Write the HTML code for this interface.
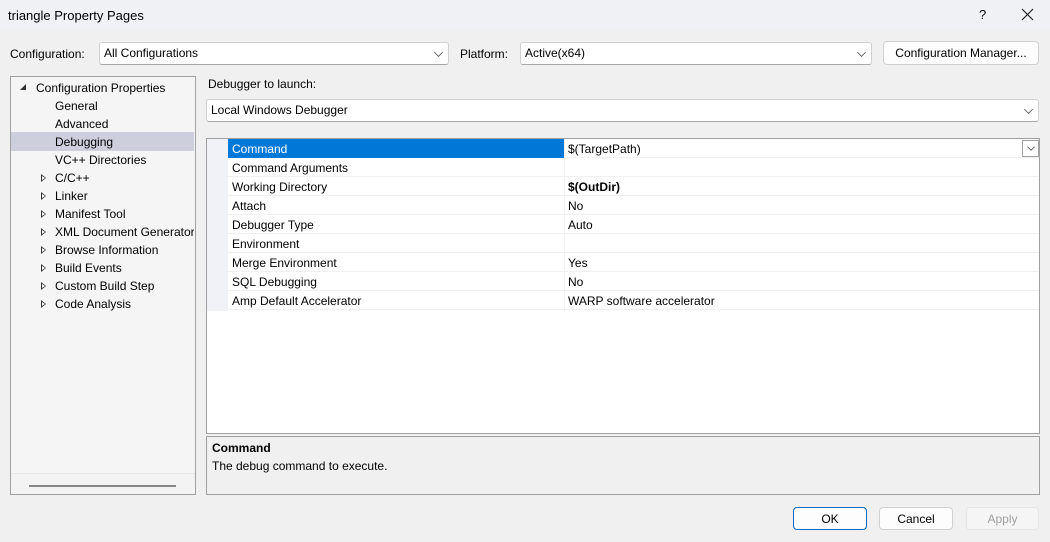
<!DOCTYPE html>
<html><head><style>
*{box-sizing:border-box;margin:0;padding:0}
body{width:1050px;height:542px;background:#f0f0f0;font-family:"Liberation Sans",sans-serif;font-size:12px;color:#000;position:relative;overflow:hidden;white-space:nowrap}
.a{position:absolute}
.combo{position:absolute;background:#fff;border:1px solid #d0d0d0;border-bottom-color:#a8a8a8;border-radius:3px;padding-left:4px;line-height:21px}
.chev{position:absolute;right:6px;top:6px;width:7px;height:7px;border-right:1px solid #606060;border-bottom:1px solid #606060;transform:rotate(45deg) scale(.9);transform-origin:center}
.btn{position:absolute;background:#fdfdfd;border:1px solid #d0d0d0;border-radius:4px;text-align:center;line-height:22px}
.tree div{position:absolute;left:0;height:18px;line-height:18px;width:183px;overflow:hidden}
.tri{position:absolute;left:30px;top:5px;width:0;height:0;border-left:5px solid #333;border-top:4px solid transparent;border-bottom:4px solid transparent}
.tri:after{content:"";position:absolute;left:-4px;top:-2px;border-left:3px solid #fff;border-top:2px solid transparent;border-bottom:2px solid transparent}
.row{position:absolute;left:21px;width:811px;height:19px;border-bottom:1px solid #f0f0f0;line-height:20px}
.row span{position:absolute}
.n{left:4px}.v{left:340px}
</style></head><body>
<div class="a" style="left:0;top:0;width:1050px;height:30px;background:#eff1f5"></div>
<div class="a" style="left:8px;top:8px;font-size:13px">triangle Property Pages</div>
<div class="a" style="left:979px;top:7px;font-size:13px">?</div>
<svg class="a" style="left:1021px;top:8px" width="13" height="13"><path d="M1 1L12 12M12 1L1 12" stroke="#222" stroke-width="1.2"/></svg>

<div class="a" style="left:10px;top:47px">Configuration:</div>
<div class="combo" style="left:99px;top:42px;width:350px;height:23px">All Configurations<div class="chev"></div></div>
<div class="a" style="left:460px;top:47px">Platform:</div>
<div class="combo" style="left:520px;top:42px;width:352px;height:23px">Active(x64)<div class="chev"></div></div>
<div class="btn" style="left:883px;top:41px;width:156px;height:24px">Configuration Manager...</div>

<div class="a tree" style="left:10px;top:76px;width:186px;height:419px;background:#f5f5f5;border:1px solid #a0a0a0">
<div style="top:2px"><span class="a" style="left:9px;top:5px;border-right:6px solid #333;border-top:6px solid transparent;width:0;height:0"></span><span style="padding-left:25px">Configuration Properties</span></div>
<div style="top:20px;padding-left:44px">General</div>
<div style="top:38px;padding-left:44px">Advanced</div>
<div style="top:55px;padding-left:44px;background:#cdd0dc;height:19px;line-height:20px">Debugging</div>
<div style="top:74px;padding-left:44px">VC++ Directories</div>
<div style="top:92px;padding-left:44px"><i class="tri"></i>C/C++</div>
<div style="top:110px;padding-left:44px"><i class="tri"></i>Linker</div>
<div style="top:128px;padding-left:44px"><i class="tri"></i>Manifest Tool</div>
<div style="top:146px;padding-left:44px"><i class="tri"></i>XML Document Generator</div>
<div style="top:164px;padding-left:44px"><i class="tri"></i>Browse Information</div>
<div style="top:182px;padding-left:44px"><i class="tri"></i>Build Events</div>
<div style="top:200px;padding-left:44px"><i class="tri"></i>Custom Build Step</div>
<div style="top:218px;padding-left:44px"><i class="tri"></i>Code Analysis</div>
<span class="a" style="left:0;top:396px;width:184px;height:21px;border-top:1px solid #e8e8e8;background:#f3f3f3"></span>
<span class="a" style="left:18px;top:408px;width:147px;height:2px;background:#858585"></span>
</div>

<div class="a" style="left:208px;top:77px">Debugger to launch:</div>
<div class="combo" style="left:206px;top:99px;width:833px;height:23px">Local Windows Debugger<div class="chev"></div></div>

<div class="a" style="left:206px;top:138px;width:834px;height:296px;background:#fff;border:1px solid #a0a0a0">
<div class="a" style="left:0;top:0;width:21px;height:172px;background:#f0f2f8"></div>
<div class="row" style="top:0"><span style="left:0;top:0;width:337px;height:19px;background:#0078d7"></span><span class="n" style="color:#fff">Command</span><span class="v">$(TargetPath)</span>
<span class="a" style="left:794px;top:1px;width:17px;height:17px;border:1px solid #a0a0a0;background:#fff"><i class="chev" style="right:4px;top:3px;width:6px;height:6px"></i></span></div>
<div class="row" style="top:19px"><span class="n">Command Arguments</span></div>
<div class="row" style="top:38px"><span class="n">Working Directory</span><span class="v" style="font-weight:bold">$(OutDir)</span></div>
<div class="row" style="top:57px"><span class="n">Attach</span><span class="v">No</span></div>
<div class="row" style="top:76px"><span class="n">Debugger Type</span><span class="v">Auto</span></div>
<div class="row" style="top:95px"><span class="n">Environment</span></div>
<div class="row" style="top:114px"><span class="n">Merge Environment</span><span class="v">Yes</span></div>
<div class="row" style="top:133px"><span class="n">SQL Debugging</span><span class="v">No</span></div>
<div class="row" style="top:152px"><span class="n">Amp Default Accelerator</span><span class="v">WARP software accelerator</span></div>
<div class="a" style="left:357px;top:0;width:1px;height:172px;background:#f0f0f0"></div>
</div>

<div class="a" style="left:206px;top:436px;width:834px;height:59px;border:1px solid #a0a0a0;background:#f0f0f0">
<div class="a" style="left:5px;top:4px;font-weight:bold">Command</div>
<div class="a" style="left:5px;top:22px">The debug command to execute.</div>
</div>

<div class="btn" style="left:793px;top:507px;width:74px;height:23px;border:1px solid #0067c0">OK</div>
<div class="btn" style="left:879px;top:507px;width:74px;height:23px">Cancel</div>
<div class="btn" style="left:966px;top:507px;width:73px;height:23px;color:#a0a0a0;background:#f5f5f5;border-color:#e5e5e5">Apply</div>
</body></html>
